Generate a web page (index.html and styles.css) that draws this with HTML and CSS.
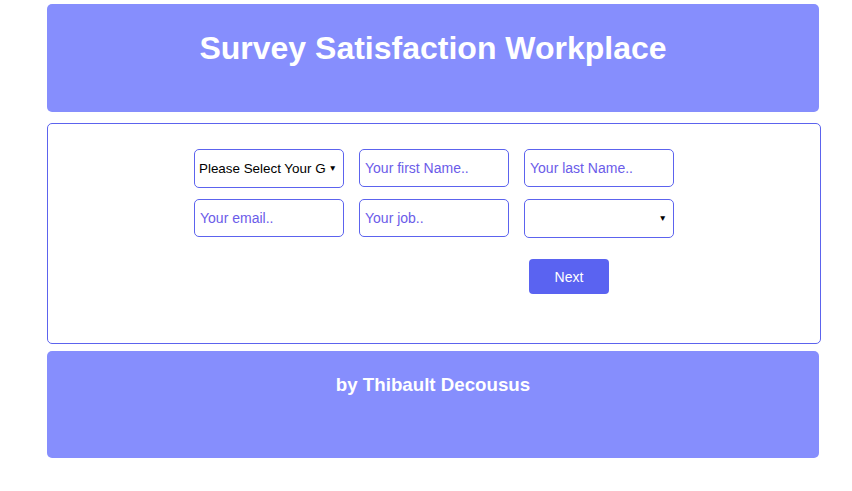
FILE: index.html
```html
<!DOCTYPE html>
<html lang="en">
<head>
<meta charset="utf-8">
<title>Survey Satisfaction Workplace</title>
<link rel="stylesheet" href="styles.css">
</head>
<body>
<div class="page">
  <header class="banner">
    <h1 class="title">Survey Satisfaction Workplace</h1>
  </header>
  <main class="card">
    <form class="form">
      <div class="select-wrap">
        <select class="field select">
          <option>Please Select Your Gender</option>
          <option>Male</option>
          <option>Female</option>
        </select>
      </div>
      <input class="field" type="text" placeholder="Your first Name..">
      <input class="field" type="text" placeholder="Your last Name..">
      <input class="field" type="email" placeholder="Your email..">
      <input class="field" type="text" placeholder="Your job..">
      <div class="select-wrap">
        <select class="field select">
          <option></option>
        </select>
      </div>
      <div class="actions">
        <button type="button" class="next">Next</button>
      </div>
    </form>
  </main>
  <footer class="banner footer">
    <h3 class="credit">by Thibault Decousus</h3>
  </footer>
</div>
</body>
</html>
```

FILE: styles.css
```css
html, body {
  margin: 0;
  padding: 0;
  background: #ffffff;
  font-family: "Liberation Sans", Arial, sans-serif;
}

.page {
  width: 772px;
  margin: 4px 0 0 47px;
  display: flex;
  flex-direction: column;
}

.banner {
  background: #868efd;
  border-radius: 5px;
  height: 108px;
  box-sizing: border-box;
  padding-top: 26px;
  text-align: center;
  color: #ffffff;
}

.title {
  margin: 0;
  font-size: 32px;
  font-weight: bold;
  line-height: 37px;
}

.card {
  margin-top: 11px;
  height: 221px;
  box-sizing: border-box;
  border: 1px solid #5c63ee;
  border-radius: 5px;
  padding-top: 25px;
  width: 774px;
}

.form {
  display: grid;
  grid-template-columns: repeat(3, 150px);
  column-gap: 15px;
  row-gap: 11px;
  justify-content: center;
}

.field {
  box-sizing: border-box;
  width: 150px;
  height: 38px;
  border: 1px solid #5c63ee;
  border-radius: 5px;
  padding: 0 5px;
  font-family: "Liberation Sans", Arial, sans-serif;
  font-size: 14px;
  color: #000000;
  background: #ffffff;
  outline: none;
}

.field::placeholder {
  color: #6b5ce9;
  opacity: 1;
}

.select-wrap {
  position: relative;
  width: 150px;
  height: 39px;
}

.select {
  display: block;
  -webkit-appearance: none;
  appearance: none;
  font-size: 13.4px;
  padding: 0 17px 0 4px;
  height: 39px;
  overflow: hidden;
  white-space: nowrap;
}

.select-wrap::after {
  content: "▼";
  position: absolute;
  right: 7px;
  top: 15px;
  font-size: 8.5px;
  line-height: 9px;
  color: #000000;
  pointer-events: none;
}

.actions {
  grid-column: 3;
  padding-top: 10px;
  padding-left: 5px;
}

.next {
  display: block;
  width: 80px;
  height: 35px;
  border: none;
  border-radius: 4px;
  background: #5a63f1;
  color: #ffffff;
  font-family: "Liberation Sans", Arial, sans-serif;
  font-size: 14px;
}

.footer {
  margin-top: 7px;
  height: 107px;
  padding-top: 23px;
}

.credit {
  margin: 0;
  font-size: 18.72px;
  font-weight: bold;
  line-height: 22px;
}
```
